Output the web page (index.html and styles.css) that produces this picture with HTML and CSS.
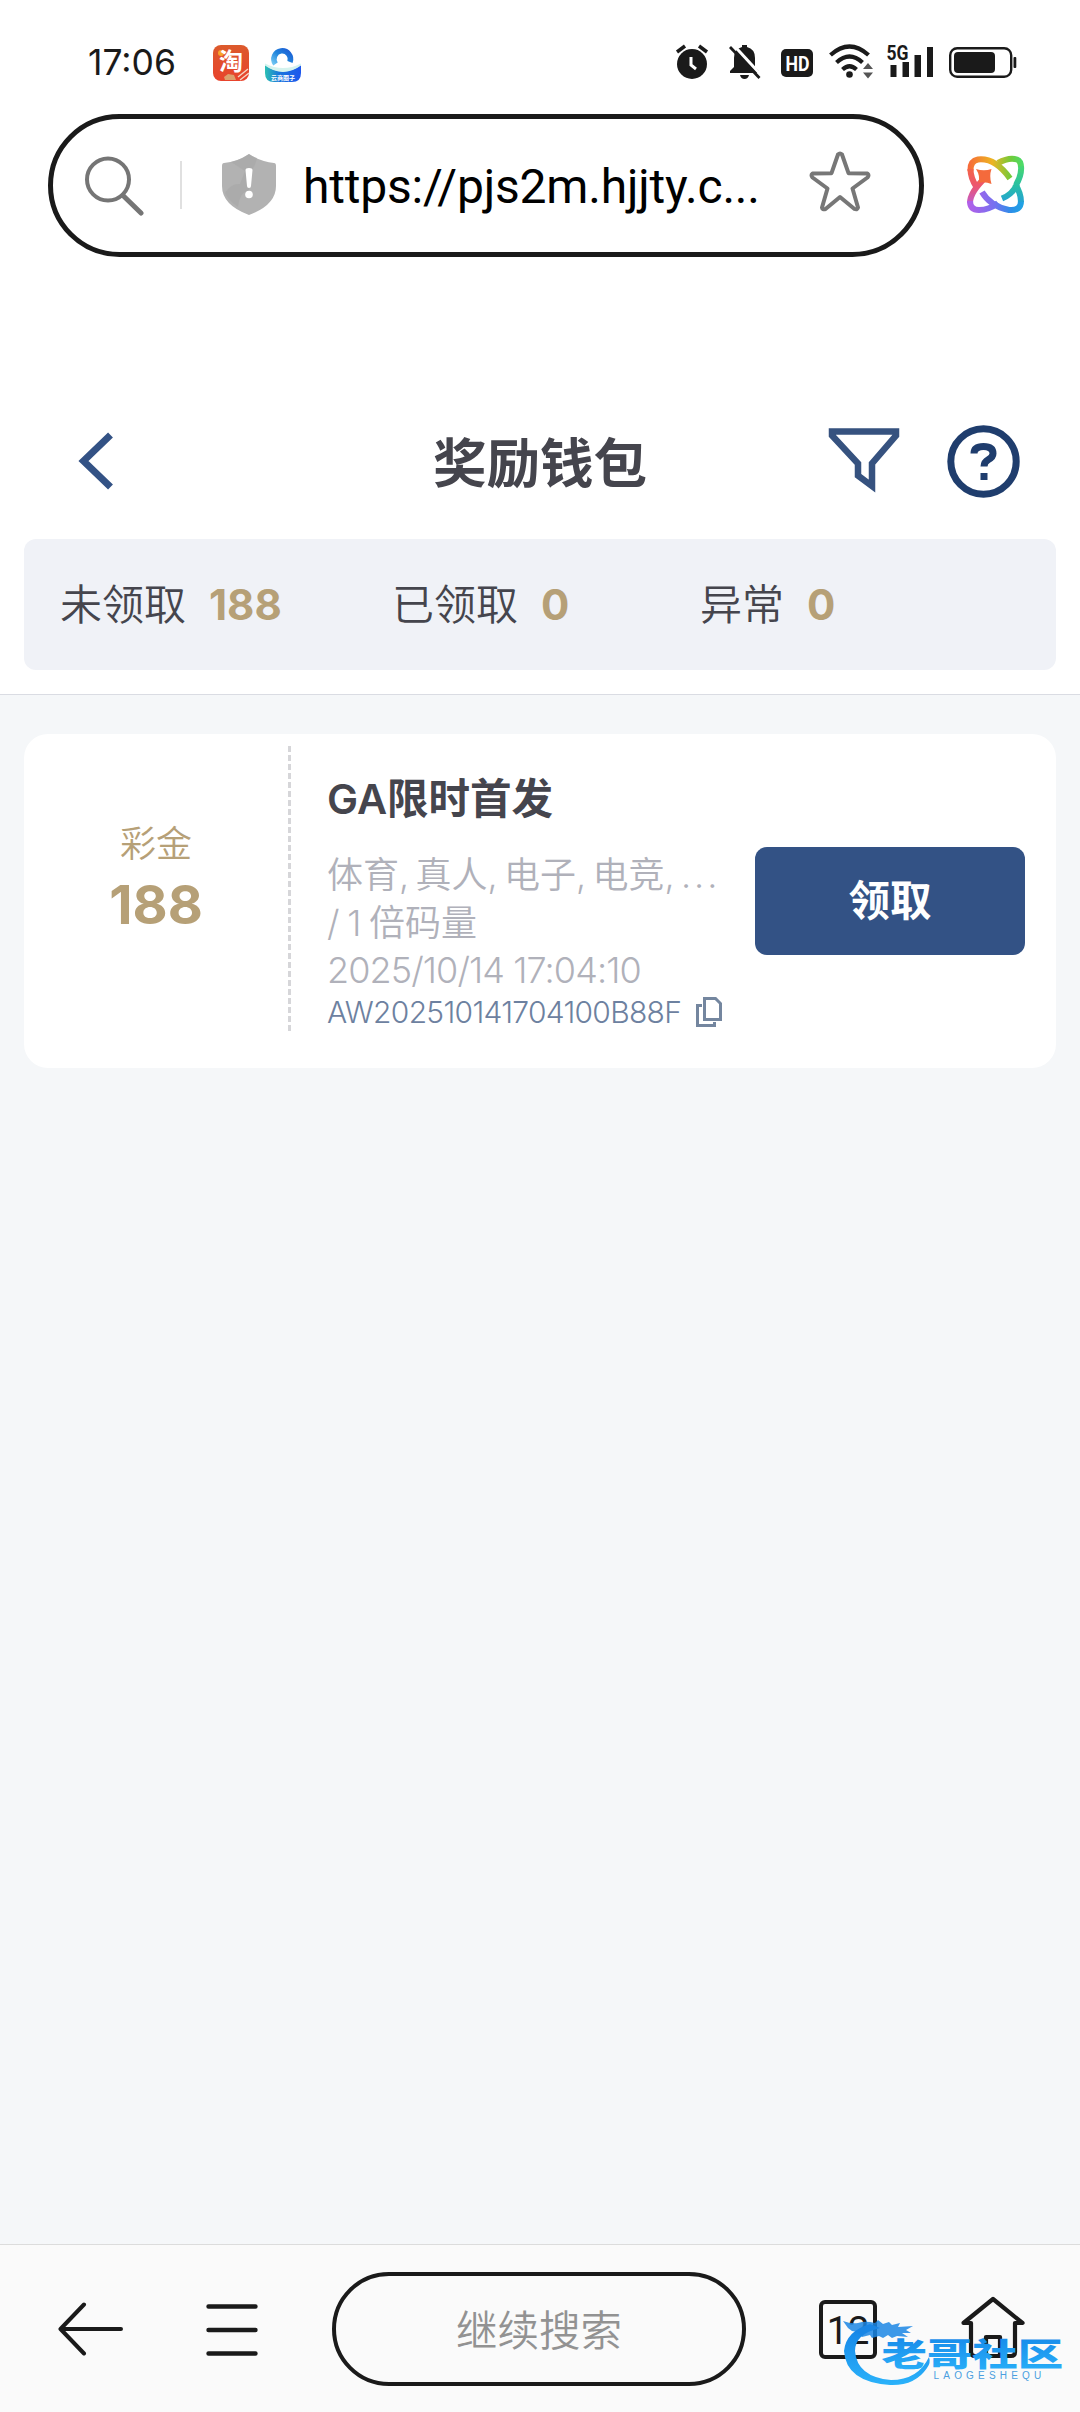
FILE: index.html
```html
<!DOCTYPE html>
<html lang="zh-CN">
<head>
<meta charset="utf-8">
<title>奖励钱包</title>
<link rel="stylesheet" href="styles.css">
</head>
<body>
<div class="screen">
  <header class="status">
    <span class="time">17:06</span>
    <svg class="app-icons" width="90" height="40" viewBox="0 0 90 40">
      <defs>
        <linearGradient id="tb" x1="0" y1="0" x2="0" y2="1"><stop offset="0" stop-color="#dc5a2c"/><stop offset="1" stop-color="#e8432c"/></linearGradient>
        <linearGradient id="bowl" x1="0" x2="1" y1="0" y2="0"><stop offset="0" stop-color="#2cc0b4"/><stop offset=".4" stop-color="#1a74dc"/><stop offset="1" stop-color="#1c56ee"/></linearGradient>
        <linearGradient id="arc" x1="0" x2="1" y1="1" y2="0"><stop offset="0" stop-color="#6ec4f2"/><stop offset=".5" stop-color="#2186dc"/><stop offset="1" stop-color="#1c5fd6"/></linearGradient>
      </defs>
      <rect x="1" y="2" width="36" height="36" rx="8" fill="url(#tb)"/>
      <circle cx="9" cy="10" r="3" fill="#f9a52c"/>
      <text x="7" y="27" class="tb-text">淘</text>
      <path d="M12 34l4-3 6 1 2 5H13z" fill="#dca06c"/>
      <path d="M26 34l10-8M28 37l9-7" stroke="#f5d9c6" stroke-width="1.400"/>
      <path d="M63.500 21a8.300 8.300 0 1 1 14.500-2" fill="none" stroke="url(#arc)" stroke-width="5.500"/>
      <path d="M53 22q18 13 36 0v8q0 9-9 9H62q-9 0-9-9z" fill="url(#bowl)"/>
      <path d="M53 20.500q18 9 36 0v2q-18 13-36 0z" fill="#d4f3ee"/>
      <text x="59" y="36.500" class="pan-text">云商圈子</text>
    </svg>
    <svg class="sys-icons" width="350" height="44" viewBox="670 40 350 44">
      <g fill="#1a1a1a">
        <circle cx="692" cy="64" r="15"/>
        <path d="M677 52l8-6M707 52l-8-6" stroke="#1a1a1a" stroke-width="3.500"/>
        <path d="M691 57v8l5 4" fill="none" stroke="#fff" stroke-width="3"/>
        <path d="M730 73v-2l4-4v-9q0-9 8-11v-2h5v2q8 2 8 11v9l4 4v2zM740 75h9q-1 4-4.500 4t-4.500-4z"/>
        <path d="M733.500 45l28.500 31" stroke="#fff" stroke-width="3"/>
        <path d="M730 47l29.500 31" stroke="#1a1a1a" stroke-width="2.800"/>
        <rect x="781" y="49" width="32" height="28" rx="5"/>
        <text x="785.500" y="71" class="hd" textLength="24" lengthAdjust="spacingAndGlyphs">HD</text>
        <g fill="none" stroke="#1a1a1a" stroke-width="4.200">
          <path d="M830.500 55q19-17 38 0M836.500 62.500q13-12 26 0M842.500 69.500q7-6.500 14 0"/>
        </g>
        <circle cx="849.500" cy="74.500" r="3.300"/>
        <path d="M863 69l5-6 5 6zM863 72.500l5 6 5-6z" fill="#555"/>
        <text x="886.500" y="60" class="net" textLength="22" lengthAdjust="spacingAndGlyphs">5G</text>
        <path d="M890.500 65h6v12h-6zM902.500 62h6.500v15h-6.500zM914.500 55h6.500v22h-6.500zM927 47h6v30h-6z"/>
        <rect x="950.200" y="48.200" width="61" height="28.600" rx="7" fill="none" stroke="#1a1a1a" stroke-width="2.400"/>
        <rect x="954" y="52" width="41" height="21" rx="4"/>
        <rect x="1013.500" y="57" width="2.800" height="11" rx="1"/>
      </g>
    </svg>
  </header>

  <div class="address-row">
    <div class="address">
      <svg class="search" width="62" height="64" viewBox="82 152 62 64" fill="none" stroke="#757575">
        <circle cx="108" cy="178.500" r="21" stroke-width="4"/>
        <path d="M123 194.500L141 212" stroke-width="5" stroke-linecap="round"/>
      </svg>
      <span class="divider"></span>
      <svg class="shield" width="54" height="61" viewBox="0 0 54 61">
        <path d="M27 0q12 8 25 9 2 0 2 3v20q0 19-27 29Q0 51 0 32V12q0-3 2-3 13-1 25-9z" fill="#b2b2b2"/>
        <path d="M27 0q4 3 8 4-2 10-8 14V37q-9 0-11 16Q6 46 3 39q6-10 15-9l5-13-14-9Q18 6 27 0z" fill="#a5a5a5" opacity=".55"/>
        <path d="M23.500 16q0-2 3.500-2t3.500 2l-1.500 16q0 2-2 2t-2-2z" fill="#fff"/>
        <circle cx="27" cy="40.500" r="3.800" fill="#fff"/>
      </svg>
      <span class="url">https://pjs2m.hjjty.c...</span>
      <svg class="star" width="64" height="62" viewBox="808 150 64 62">
        <path d="M838 154.500q2-2 4 0l6.500 18.700 19 .3q2 1.500 0 4l-15 11 5.500 19q-1 2.500-3.500 1.500L840 197l-14.500 12q-3 1-3.500-1.500l5.500-19-15-11q-2-2.500 0-4l19-.3z" fill="none" stroke="#777" stroke-width="4" stroke-linejoin="round"/>
      </svg>
    </div>
    <svg class="assistant" width="60" height="60" viewBox="0 0 60 60">
      <defs>
        <linearGradient id="g1" gradientUnits="userSpaceOnUse" x1="2" x2="56" y1="0" y2="0"><stop offset="0" stop-color="#f7693a"/><stop offset=".45" stop-color="#edb421"/><stop offset=".8" stop-color="#6fcb3a"/><stop offset="1" stop-color="#4ddb68"/></linearGradient>
        <linearGradient id="g2" gradientUnits="userSpaceOnUse" x1="2" x2="56" y1="0" y2="0"><stop offset="0" stop-color="#b35fe8"/><stop offset=".5" stop-color="#7471f0"/><stop offset=".8" stop-color="#2b8fe8"/><stop offset="1" stop-color="#20a2e4"/></linearGradient>
        <linearGradient id="g3" gradientUnits="userSpaceOnUse" x1="0" x2="0" y1="8" y2="54"><stop offset="0" stop-color="#f7693a"/><stop offset=".5" stop-color="#ec5570"/><stop offset="1" stop-color="#b35fe8"/></linearGradient>
        <linearGradient id="g4" gradientUnits="userSpaceOnUse" x1="0" x2="0" y1="8" y2="54"><stop offset="0" stop-color="#4ddb68"/><stop offset=".5" stop-color="#28bfa5"/><stop offset="1" stop-color="#2496e8"/></linearGradient>
      </defs>
      <g fill="none" stroke-width="6">
        <path d="M32 8Q43 2 51 4.500q4 1.500 4 8" stroke="url(#g1)"/>
        <path d="M55 11q1 9-5 19" stroke="url(#g4)"/>
        <path d="M51 29q-4 10-15 14.500" stroke="url(#g4)"/>
        <path d="M4.500 16Q4 6 12 4.500q17-2 32 19" stroke="url(#g1)"/>
        <path d="M20 22Q4 37 4 48" stroke="url(#g3)"/>
        <path d="M4.500 14q0 9 6 18" stroke="url(#g3)"/>
        <path d="M4 46q0 9 9 9 10 0 19-7" stroke="url(#g2)"/>
        <path d="M16 37q8 14 27 18 12 1 12-9" stroke="url(#g2)"/>
        <path d="M55 47q0-9-6-18" stroke="url(#g4)"/>
      </g>
      <path d="M10 14q8 2.500 15.500 0-2.500 7 0 15-7-3-13-1 2-7-2.500-14z" fill="#f46a3c"/>
    </svg>
  </div>

  <nav class="nav">
    <svg class="back" width="36" height="58" viewBox="0 0 36 58"><path d="M32.500 3L5.500 29l27 26" fill="none" stroke="#335285" stroke-width="7"/></svg>
    <h1 class="title">奖励钱包</h1>
    <svg class="filter" width="72" height="67" viewBox="828 428 72 67"><path d="M832 431.500h64v4l-24 28v22.500l-14-10.500v-12l-26-28z" fill="none" stroke="#36527f" stroke-width="6.500"/></svg>
    <svg class="help" width="73" height="73" viewBox="0 0 73 73">
      <circle cx="36.500" cy="36.500" r="32.700" fill="none" stroke="#1f3d6d" stroke-width="7"/>
      <path d="M27 28.500q0-7 9.500-7t9.500 7q0 3.500-4.500 6t-4.500 7" fill="none" stroke="#1f3d6d" stroke-width="7"/>
      <path d="M33.500 48h7v7h-7z" fill="#1f3d6d"/>
    </svg>
  </nav>

  <section class="summary">
    <div class="stat stat-a"><span>未领取</span><b>188</b></div>
    <div class="stat stat-b"><span>已领取</span><b>0</b></div>
    <div class="stat"><span>异常</span><b>0</b></div>
  </section>

  <main class="list">
    <article class="card">
      <div class="amount"><span class="kind">彩金</span><b class="value">188</b></div>
      <div class="dash"></div>
      <div class="info">
        <h2 class="name"><span class="latin">GA</span>限时首发</h2>
        <p class="games">体育, 真人, 电子, 电竞, <span class="dots">...</span></p>
        <p class="turnover">/ 1 倍码量</p>
        <p class="date">2025/10/14 17:04:10</p>
        <p class="order"><span>AW202510141704100B88F</span>
          <svg width="28" height="32" viewBox="0 0 28 32" fill="none" stroke="#74869f" stroke-width="3"><path d="M9.500 2.500h11l5 5v16h-16zM7 9.500H2.500v20h17V26"/></svg></p>
      </div>
      <button class="claim">领取</button>
    </article>
  </main>

  <footer class="toolbar">
    <svg class="tool-back" width="66" height="56" viewBox="58 2301 66 56"><path d="M121 2329H61M84 2304.500L60.500 2329l23.500 24.500" fill="none" stroke="#1a1a1a" stroke-width="4" stroke-linecap="round" stroke-linejoin="round"/></svg>
    <svg class="tool-menu" width="52" height="54" viewBox="0 0 52 54"><path d="M2.500 3.500h47M2.500 27h47M2.500 50.500h47" stroke="#1a1a1a" stroke-width="4.400" stroke-linecap="round"/></svg>
    <div class="search-pill">继续搜索</div>
    <div class="tabs">12</div>
    <svg class="home" width="66" height="64" viewBox="960 2296 66 64"><path d="M971 2323h-7.500l29.500-24 29.500 24h-7.500v29q0 4-4 4h-36q-4 0-4-4zM986 2356v-19h14v19" fill="none" stroke="#1a1a1a" stroke-width="4.200" stroke-linejoin="round"/></svg>
  </footer>

  <svg class="watermark" width="236" height="92" viewBox="836 2300 236 92">
    <defs>
      <linearGradient id="wm" x1="0" x2="0" y1="0" y2="1"><stop offset="0" stop-color="#1482e6"/><stop offset="1" stop-color="#2ab2fa"/></linearGradient>
    </defs>
    <path d="M880 2328Q855 2334 855 2351 857 2377 891 2380 918 2380 929 2357 931 2363 927 2368 915 2386 890 2385 846 2382 844 2351 846 2331 870 2324z" fill="url(#wm)"/>
    <path d="M843 2321q8 3 15 2 6-2 12-1l5 1 3-3 5 4 6-2 3 3 8-2-2 4 15-1-7 4 5 3-9 0 6 4-11-1-5 2-4-3-5 3-4-2-7 2-2-3-8 2-4-5-6-1-4-3z" fill="#1b86e4" opacity=".85"/>
    <text transform="translate(881.500 2365.500) scale(1.420 1)" class="wm-main" fill="url(#wm)">老哥社区</text>
    <text x="933.500" y="2378.500" class="wm-sub">LAOGESHEQU</text>
  </svg>
</div>
</body>
</html>
```
FILE: styles.css
```css
* { box-sizing: border-box; margin: 0; padding: 0; }
body {
  width: 1080px;
  font-family: Inter, "Noto Sans CJK SC", sans-serif;
  background: #fff;
}
svg { display: block; flex: none; }
.screen {
  position: relative;
  width: 1080px;
  height: 2412px;
  display: flex;
  flex-direction: column;
  overflow: hidden;
}

.status { height: 113px; flex: none; display: flex; align-items: flex-start; padding: 0 60px 0 88px; }
.time { width: 124px; margin-top: 41px; font-size: 35.5px; line-height: 44px; color: #1a1a1a; }
.app-icons { margin-top: 43px; }
.sys-icons { margin: 40px 0 0 auto; }
.tb-text { font: 700 24px "Noto Sans CJK SC", sans-serif; fill: #fff; }
.pan-text { font: 700 6px "Noto Sans CJK SC", sans-serif; fill: #fff; }
.hd { font: 700 21px Roboto, sans-serif; fill: #fff; }
.net { font: 700 20px Roboto, sans-serif; }

.address-row { height: 144px; flex: none; display: flex; align-items: center; padding-left: 48px; }
.address {
  width: 876px; height: 143px;
  border: 5px solid #1a1a1a; border-radius: 72px;
  display: flex; align-items: center;
  padding-left: 29px;
}
.divider { width: 2px; height: 48px; margin: 0 40px 0 36px; background: #e0e0e0; }
.shield { margin: -1px 27px 0 0; }
.url { width: 505px; font: 48px/60px Roboto, sans-serif; letter-spacing: -.2px; color: #000; white-space: nowrap; margin-top: 3px; }
.star { margin-top: -8px; }
.assistant { margin-left: 42px; }

.nav { height: 282px; flex: none; display: flex; align-items: flex-start; padding: 168px 60px 0 78px; }
.back { margin-top: 7px; }
.title {
  width: 218px; margin: -1px 0 0 319px;
  font-size: 53.5px; line-height: 80px; font-weight: 700; color: #45454d; white-space: nowrap;
}
.filter { margin: 3px 0 0 179px; }
.help { margin-left: 47px; }

.summary {
  height: 131px; flex: none; margin: 0 24px;
  border-radius: 12px; background: #f0f2f7;
  display: flex; align-items: center; padding-left: 36px;
}
.stat { display: flex; align-items: center; font-size: 42px; line-height: 60px; color: #45454d; font-weight: 350; white-space: nowrap; }
.stat b { margin-left: 23px; font-size: 42px; font-weight: 650; color: #b6a077; }
.stat-a { width: 332px; }
.stat-b { width: 308px; }

.list { flex: 1; margin-top: 24px; padding: 39px 24px 0; background: #f5f7f9; border-top: 1px solid #dadce3; }
.card { height: 334px; border-radius: 24px; background: #fff; display: flex; }
.amount { width: 264px; padding-top: 83px; display: flex; flex-direction: column; align-items: center; color: #b6a077; }
.kind { font-size: 36px; line-height: 54px; font-weight: 350; }
.value { font-size: 54px; line-height: 68px; font-weight: 650; }
.dash { width: 3px; height: 286px; margin-top: 12px; background: repeating-linear-gradient(#d6d6d9 0 6px, transparent 6px 9px); }
.info { width: 451px; padding: 38px 0 0 36px; white-space: nowrap; color: #b0b1ba; font-weight: 350; }
.name { font-size: 41.5px; line-height: 54px; font-weight: 700; color: #45454d; }
.latin { font-weight: 600; }
.games, .turnover { font-size: 36px; line-height: 48px; }
.games { margin-top: 25px; word-spacing: -3.8px; }
.turnover { word-spacing: -2.5px; }
.dots { letter-spacing: 3px; }
.date { margin-top: 1px; font-size: 36px; line-height: 44px; font-weight: 300; letter-spacing: -.9px; }
.order { display: flex; align-items: center; gap: 14px; font-size: 30px; line-height: 40px; font-weight: 300; letter-spacing: -.7px; color: #6d81a0; }
.claim {
  width: 270px; height: 108px; margin: 113px 0 0 13px;
  border: 0; border-radius: 12px; background: #335285; color: #fff;
  font: 700 41.5px/60px Inter, "Noto Sans CJK SC", sans-serif;
}

.toolbar { height: 168px; flex: none; display: flex; align-items: flex-start; padding: 27px 0 0 58px; background: #fafafa; border-top: 1px solid #dcdcdc; }
.tool-back { margin-top: 29px; }
.tool-menu { margin: 31px 0 0 82px; }
.search-pill {
  width: 414px; height: 114px; margin-left: 74px;
  border: 4px solid #1a1a1a; border-radius: 57px;
  font-size: 41.5px; line-height: 110px; text-align: center; font-weight: 350; color: #929292;
}
.tabs {
  width: 58px; height: 59px; margin: 28px 0 0 73px;
  border: 4px solid #1a1a1a; border-radius: 6px;
  font: 38px/54px Roboto, sans-serif; text-align: center; color: #1a1a1a;
}
.home { margin: 24px 0 0 83px; }

.watermark { position: absolute; left: 836px; top: 2300px; }
.wm-main { font: 900 32px "Noto Sans CJK SC", sans-serif; }
.wm-sub { font: 10px "Liberation Sans", sans-serif; fill: #4a9fe0; letter-spacing: 4.2px; }
```
